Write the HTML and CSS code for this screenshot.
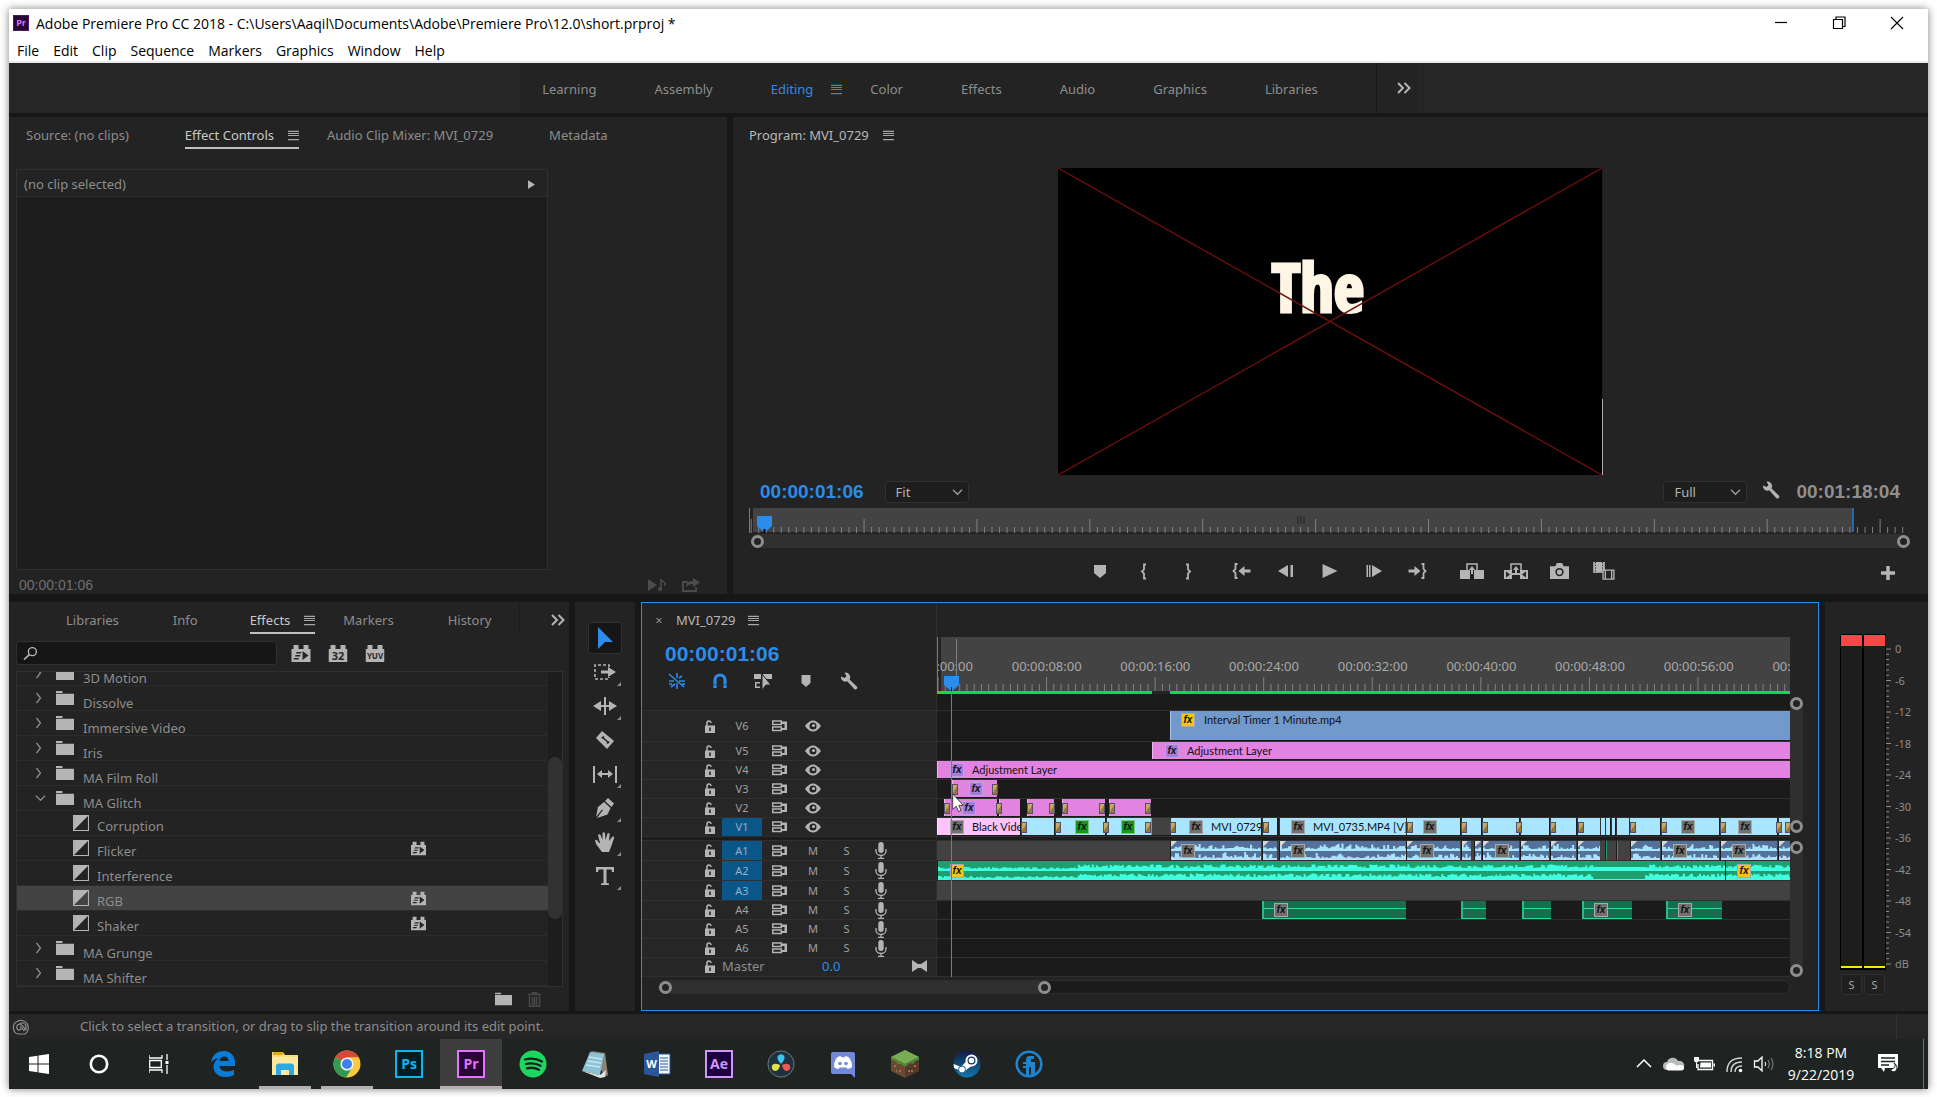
FILE: index.html
```html
<!DOCTYPE html>
<html lang="en">
<head>
<meta charset="utf-8">
<title>Adobe Premiere Pro CC 2018</title>
<link rel="stylesheet" href="styles.css">
</head>
<body>
<svg class="defs" aria-hidden="true">
  <symbol id="i-menu" viewBox="0 0 12 12"><path d="M0 1.5h12M0 6h12M0 10.5h12M0 3.8h12" stroke="currentColor" stroke-width="1.2" fill="none"/></symbol>
  <symbol id="i-more" viewBox="0 0 14 12"><path d="M1 1l5 5-5 5M7.500 1l5 5-5 5" stroke="currentColor" stroke-width="2" fill="none"/></symbol>
  <symbol id="i-down" viewBox="0 0 12 8"><path d="M1 1.500l5 5 5-5" stroke="currentColor" stroke-width="1.300" fill="none"/></symbol>
  <symbol id="i-right" viewBox="0 0 8 12"><path d="M1.500 1l4 5-4 5" stroke="currentColor" stroke-width="1.300" fill="none"/></symbol>
  <symbol id="i-wrench" viewBox="0 0 18 18"><path d="M1 4.500a4.500 4.500 0 0 0 6.300 4.800l6.900 7.600a1.700 1.700 0 0 0 2.600-2.300L9.500 7.500A4.500 4.500 0 0 0 4.500.800l2 3.300-1.900 1.900z" fill="currentColor"/></symbol>
  <symbol id="i-folder" viewBox="0 0 18 14"><path d="M0 0h6.500v2H0zM0 2.800h18V14H0z" fill="currentColor"/></symbol>
  <symbol id="i-trans" viewBox="0 0 15 15"><path d="M.5.5h14v14H.5z" fill="none" stroke="currentColor"/><path d="M1 1h13L1 14z" fill="currentColor"/></symbol>
  <symbol id="i-accel" viewBox="0 0 19 17"><path d="M0 4h2V0h5v4h5V0h5v4h2v13H0z" fill="currentColor"/><path d="M11 6l6 4.500-6 4.500zM5 7h5l-.5 1.500h-5zM4 10h5l-.5 1.500h-5zM2.500 13h5L7 14.500H2z" fill="#262626"/></symbol>
  <symbol id="i-brick" viewBox="0 0 19 17"><path d="M0 4h2V0h5v4h5V0h5v4h2v13H0z" fill="currentColor"/></symbol>
  <symbol id="i-lock" viewBox="0 0 10 13"><path d="M0 5.500h10V13H0z" fill="currentColor"/><path d="M2 6V3.200A2 2.200 0 0 1 6 3" fill="none" stroke="currentColor" stroke-width="1.500"/><path d="M4.200 7.500h1.600v3.500H4.200z" fill="#232323"/></symbol>
  <symbol id="i-sync" viewBox="0 0 16 12"><path d="M.700 1h8.600v3.600H.700zM.700 7h8.600v3.600H.700z" fill="none" stroke="currentColor" stroke-width="1.500"/><path d="M10 1.500h5v8.500h-5V8h2.500V4H10z" fill="currentColor"/></symbol>
  <symbol id="i-eye" viewBox="0 0 16 12"><path d="M0 6Q8-5 16 6 8 17 0 6z" fill="currentColor"/><circle cx="8" cy="6" r="3.500" fill="#232323"/><circle cx="8.500" cy="5.500" r="1.600" fill="currentColor"/></symbol>
  <symbol id="i-mic" viewBox="0 0 12 17"><rect x="3.300" y="0" width="5.400" height="11" rx="2.700" fill="currentColor"/><path d="M1 7v2a5 4.500 0 0 0 10 0V7M6 13.500v3M3 16.300h6" fill="none" stroke="currentColor" stroke-width="1.300"/></symbol>
  <symbol id="i-marker" viewBox="0 0 12 13"><path d="M0 0h12v8l-6 5-6-5z" fill="currentColor"/></symbol>
  <symbol id="i-win" viewBox="0 0 20 20"><path d="M0 3l8.500-1.200v7.700H0zM9.500 1.600L20 0v9.500H9.500zM0 10.500h8.500v7.700L0 17zM9.500 10.500H20V20L9.500 18.400z" fill="#fff"/></symbol>
</svg>

<div class="window">
  <header class="titlebar">
    <svg class="app-mark" viewBox="0 0 16 16"><path d="M0 0h16v16H0z" fill="#2a0634"/><path d="M.5.5h15v15H.5z" fill="none" stroke="#4c1766"/><text x="8" y="11" text-anchor="middle" class="mark-text">Pr</text></svg>
    <h1 class="title">Adobe Premiere Pro CC 2018 - C:\Users\Aaqil\Documents\Adobe\Premiere Pro\12.0\short.prproj *</h1>
    <div class="win-controls">
      <button aria-label="Minimize"><svg viewBox="0 0 14 14"><path d="M1 6.500h12" stroke="#000" stroke-width="1.200"/></svg></button>
      <button aria-label="Restore"><svg viewBox="0 0 14 14"><path d="M1.500 3.500h9v9h-9zM4 3V1h9v9.500h-2" fill="none" stroke="#000" stroke-width="1.200"/></svg></button>
      <button aria-label="Close"><svg viewBox="0 0 14 14"><path d="M1 1l12 12M13 1L1 13" stroke="#000" stroke-width="1.200"/></svg></button>
    </div>
  </header>
  <nav class="menubar" aria-label="Menu">
    <button>File</button><button>Edit</button><button>Clip</button><button>Sequence</button><button>Markers</button><button>Graphics</button><button>Window</button><button>Help</button>
  </nav>

  <nav class="workspaces" aria-label="Workspaces">
    <div class="workspace-group">
      <button>Learning</button><button>Assembly</button>
      <button class="on">Editing<svg class="menu-icon"><use href="#i-menu"/></svg></button>
      <button class="after-on">Color</button><button>Effects</button><button>Audio</button><button>Graphics</button><button>Libraries</button>
      <button class="more" aria-label="More workspaces"><svg class="more-icon"><use href="#i-more"/></svg></button>
    </div>
  </nav>

  <main class="panels">
    <div class="top-row">
      <section class="panel effect-controls">
        <div class="tabs tabs-source">
          <button class="tab">Source: (no clips)</button>
          <button class="tab active">Effect Controls<svg class="menu-icon"><use href="#i-menu"/></svg></button>
          <button class="tab">Audio Clip Mixer: MVI_0729</button>
          <button class="tab">Metadata</button>
        </div>
        <div class="clip-area">
          <div class="clip-head"><span>(no clip selected)</span><svg class="tri" viewBox="0 0 8 10"><path d="M0 0l8 5-8 5z" fill="currentColor"/></svg></div>
          <div class="clip-body"></div>
        </div>
        <div class="ec-foot">
          <span class="tc-small">00:00:01:06</span>
          <svg class="foot-icon" viewBox="0 0 18 14"><path d="M0 1l9 6-9 6z" fill="currentColor"/><path d="M13 11V2l4 3v3" fill="none" stroke="currentColor" stroke-width="1.500"/><circle cx="12" cy="11" r="2" fill="currentColor"/></svg>
          <svg class="foot-icon" viewBox="0 0 18 14"><path d="M6 4H1v9h13V9" fill="none" stroke="currentColor" stroke-width="1.800"/><path d="M4 9c0-4 3-6 7-6V0l7 4.500L11 9V6C8 6 6 7 4 9z" fill="currentColor"/></svg>
        </div>
      </section>

      <section class="panel program">
        <div class="tabs tabs-program"><button class="tab lit">Program: MVI_0729<svg class="menu-icon"><use href="#i-menu"/></svg></button></div>
        <div class="monitor">
          <span class="caption">The</span>
          <svg class="cross" viewBox="0 0 545 307" preserveAspectRatio="none"><path d="M0 0l545 307M545 0L0 307" stroke="#6c0f0c" stroke-width="1.400"/></svg>
        </div>
        <div class="monitor-bar">
          <span class="tc blue">00:00:01:06</span>
          <span class="pick"><select aria-label="Zoom level"><option>Fit</option></select><svg class="chev"><use href="#i-down"/></svg></span>
          <span class="pick pick-right"><select aria-label="Playback resolution"><option>Full</option></select><svg class="chev"><use href="#i-down"/></svg></span>
          <button class="icon-btn" aria-label="Settings"><svg class="i18"><use href="#i-wrench"/></svg></button>
          <span class="tc grey">00:01:18:04</span>
        </div>
        <div class="scrub">
          <div class="scrub-range"></div>
          <svg class="ticks" id="scrub-ticks"></svg>
          <svg class="grip" viewBox="0 0 8 8"><path d="M1 0v8M4 0v8M7 0v8" stroke="#222"/></svg>
          <svg class="scrub-head" viewBox="0 0 15 17"><path d="M0 0h15v10l-7.500 7L0 10z" fill="#2b8ceb"/><path d="M7.500 13v4" stroke="#000" stroke-width="2"/></svg>
        </div>
        <div class="hbar"><i class="ring"></i><i class="ring"></i></div>
        <div class="transport">
          <div class="transport-group">
            <button aria-label="Add marker"><svg class="w12" viewBox="0 0 12 13"><use href="#i-marker"/></svg></button>
            <button aria-label="Mark in"><svg class="w8" viewBox="0 0 8 16"><path d="M6 1H4v5L2 8l2 2v5h2" fill="none" stroke="currentColor" stroke-width="1.800"/></svg></button>
            <button aria-label="Mark out"><svg class="w8" viewBox="0 0 8 16"><path d="M2 1h2v5l2 2-2 2v5H2" fill="none" stroke="currentColor" stroke-width="1.800"/></svg></button>
            <button class="gap-before" aria-label="Go to in"><svg class="w18" viewBox="0 0 18 16"><path d="M5 1H3v5L1 8l2 2v5h2" fill="none" stroke="currentColor" stroke-width="1.800"/><path d="M6 8l6-5v3.500h6v3h-6V13z" fill="currentColor"/></svg></button>
            <button aria-label="Step back"><svg class="w16" viewBox="0 0 16 12"><path d="M0 6l10-6v12zM12.500 0h2.500v12h-2.500z" fill="currentColor"/></svg></button>
            <button aria-label="Play"><svg class="w16" viewBox="0 0 16 15"><path d="M0 0l16 7.500L0 15z" fill="currentColor"/></svg></button>
            <button aria-label="Step forward"><svg class="w16" viewBox="0 0 16 12"><path d="M16 6L6 0v12zM.5 0h1.500v12H.5zM3 0h1.500v12H3z" fill="currentColor"/></svg></button>
            <button aria-label="Go to out"><svg class="w18" viewBox="0 0 18 16"><path d="M13 1h2v5l2 2-2 2v5h-2" fill="none" stroke="currentColor" stroke-width="1.800"/><path d="M12 8L6 3v3.500H0v3h6V13z" fill="currentColor"/></svg></button>
            <button class="gap-before" aria-label="Lift"><svg class="w24" viewBox="0 0 24 16"><path d="M0 7h10v9H0zM14 7h10v9H14z" fill="currentColor"/><path d="M7 10V1h10v9" fill="none" stroke="currentColor" stroke-width="1.500"/><path d="M12 3l3 4h-2v4h-2V7H9z" fill="currentColor"/></svg></button>
            <button aria-label="Extract"><svg class="w24" viewBox="0 0 24 16"><path d="M0 7h8v9H0zM16 7h8v9h-8z" fill="currentColor"/><path d="M7 10V1h10v9" fill="none" stroke="currentColor" stroke-width="1.500"/><path d="M12 3l3 4h-2v4h-2V7H9z" fill="currentColor"/><path d="M2 8.500l4 3-4 3zM22 8.500l-4 3 4 3z" fill="#232323"/><path d="M8 10h8v2H8z" fill="currentColor"/></svg></button>
            <button aria-label="Export frame"><svg class="w18" viewBox="0 0 18 15"><path d="M0 3h5l1.500-3h5L13 3h5v12H0z" fill="currentColor"/><circle cx="9" cy="8.500" r="3.200" fill="none" stroke="#232323" stroke-width="1.500"/></svg></button>
            <button aria-label="Comparison view"><svg class="w24" viewBox="0 0 24 20"><path d="M0 0h13v12H0z" fill="currentColor"/><path d="M2.500 0v12M10.500 0v12" stroke="#232323" stroke-dasharray="1.500 1.500"/><path d="M11 9h12v10H11z" fill="#232323" stroke="currentColor" stroke-width="1.500"/><path d="M13.500 9v10M20.500 9v10" stroke="currentColor" stroke-width="1.500"/></svg></button>
          </div>
          <button class="plus" aria-label="Button editor"><svg class="w14" viewBox="0 0 14 14"><path d="M7 0v14M0 7h14" stroke="currentColor" stroke-width="3.500"/></svg></button>
        </div>
      </section>
    </div>

    <div class="bottom-row">
      <section class="panel effects">
        <div class="tabs tabs-effects">
          <button class="tab">Libraries</button><button class="tab">Info</button>
          <button class="tab active">Effects<svg class="menu-icon"><use href="#i-menu"/></svg></button>
          <button class="tab">Markers</button><button class="tab">History</button>
          <button class="tab-more" aria-label="More panels"><svg class="more-icon"><use href="#i-more"/></svg></button>
        </div>
        <div class="search-row">
          <label class="search"><svg class="lens" viewBox="0 0 16 14"><circle cx="10" cy="5" r="4.300" fill="none" stroke="currentColor" stroke-width="1.500"/><path d="M7 8l-6 5.500" stroke="currentColor" stroke-width="1.800"/></svg><input type="text" aria-label="Search effects"></label>
          <button class="brick" aria-label="Accelerated effects"><svg><use href="#i-accel"/></svg></button>
          <button class="brick" aria-label="32-bit color"><svg viewBox="0 0 19 17"><use href="#i-brick"/><text x="9.500" y="15" text-anchor="middle" class="brick-text">32</text></svg></button>
          <button class="brick" aria-label="YUV effects"><svg viewBox="0 0 19 17"><use href="#i-brick"/><text x="9.500" y="14" text-anchor="middle" class="brick-text small">YUV</text></svg></button>
        </div>
        <div class="tree-wrap">
          <ul class="tree" id="tree"></ul>
          <div class="tree-scroll"><i class="thumb"></i></div>
        </div>
        <div class="tree-foot">
          <button class="icon-btn" aria-label="New bin"><svg class="w17" viewBox="0 0 18 14"><use href="#i-folder"/></svg></button>
          <button class="icon-btn dim" aria-label="Delete"><svg class="w13" viewBox="0 0 13 15"><path d="M0 2.500h13M4.500 2V.700h4V2M1.500 4v10.300h10V4M4.500 5v8M6.500 5v8M8.500 5v8" fill="none" stroke="currentColor" stroke-width="1.400"/></svg></button>
        </div>
      </section>

      <section class="panel tools" aria-label="Tools">
        <button class="tool on" aria-label="Selection"><svg viewBox="0 0 24 24"><path d="M5 1l15 15h-8l-7 7z" fill="#2b8ceb"/></svg></button>
        <button class="tool sub" aria-label="Track select"><svg viewBox="0 0 24 24"><path d="M16 7V5H2v14h14v-2" fill="none" stroke="currentColor" stroke-width="1.600" stroke-dasharray="3 2"/><path d="M8 10.500h7V7l8 5-8 5v-3.500H8z" fill="currentColor"/></svg></button>
        <button class="tool sub" aria-label="Ripple edit"><svg viewBox="0 0 24 24"><path d="M12 3v18" stroke="currentColor" stroke-width="2"/><path d="M0 12l8-5v4h8V7l8 5-8 5v-4H8v4z" fill="currentColor"/></svg></button>
        <button class="tool" aria-label="Razor"><svg viewBox="0 0 24 24"><path d="M9 3l12 10-7 8L3 10z" fill="currentColor"/><path d="M9 9l7 6M9 10.500l2-2M14 15.500l2-2" stroke="#232323" stroke-width="1.600"/></svg></button>
        <button class="tool sub" aria-label="Slip"><svg viewBox="0 0 24 24"><path d="M1 4v17M23 4v17" stroke="currentColor" stroke-width="2"/><path d="M4 12l5-4v3h6V8l5 4-5 4v-3H9v3z" fill="currentColor"/></svg></button>
        <button class="tool sub" aria-label="Pen"><svg viewBox="0 0 24 24"><path d="M15 2l6 5.500-2.500 3.500-6.500-6zM11 6l6.500 6-3 6.500L4 22l6-8-1-.5L3 21l2-10z" fill="currentColor"/></svg></button>
        <button class="tool sub" aria-label="Hand"><svg viewBox="0 0 24 24"><path d="M9 22L3 14l-1-4q2-1 4 3l1 0L5 5q1.500-1.500 2.500 0L9.500 10 9.500 3q1.200-1.500 2.500 0l.5 7L14.500 3.500q1.500-1 2.200.5L16 11l3.500-4.500q1.500-.5 1.800 1L18 17l-2 5z" fill="currentColor"/></svg></button>
        <button class="tool sub" aria-label="Type"><svg viewBox="0 0 24 24"><path d="M3 3h18v5h-2l-.5-2.500h-5V19l2.500.5V21H8v-1.500l2.500-.5V5.500h-5L5 8H3z" fill="currentColor"/></svg></button>
      </section>

      <section class="panel timeline" aria-label="Timeline">
        <div class="tl-grid">
          <div class="tl-left">
            <div class="tl-tab"><button class="close" aria-label="Close sequence">×</button><button class="tab lit">MVI_0729<svg class="menu-icon"><use href="#i-menu"/></svg></button></div>
            <div class="tc-big">00:00:01:06</div>
            <div class="tl-tools">
              <button class="blue" aria-label="Nest"><svg viewBox="0 0 18 18"><path d="M1 2l15 13M9 1v5M9 11v6M1 9h5M11 9h6M3 15l4-3M11 6l3-2M1 12h3M14 12h3" stroke="currentColor" stroke-width="1.600"/></svg></button>
              <button class="blue" aria-label="Snap"><svg viewBox="0 0 18 18"><path d="M4 16V8a5 5 0 0 1 10 0v8" fill="none" stroke="currentColor" stroke-width="3.200"/><path d="M2 12.500h4M12 12.500h4" stroke="#1a4f83"/></svg></button>
              <button aria-label="Linked selection"><svg viewBox="0 0 18 18"><path d="M0 2h7v5H0zM9 2h9v5H9zM6 10H1v6h5v-1.500H2.500v-3H6z" fill="currentColor"/><path d="M8 2l9 11h-5l-4 5z" fill="currentColor" stroke="#232323"/></svg></button>
              <button aria-label="Add marker"><svg viewBox="0 0 18 18"><path d="M4.500 3h9v8L9 15l-4.500-4z" fill="currentColor"/></svg></button>
              <button aria-label="Timeline settings"><svg viewBox="0 0 18 18"><use href="#i-wrench"/></svg></button>
            </div>
            <div class="heads" id="heads"></div>
          </div>
          <div class="tl-body">
            <div class="ruler"><div class="labels" id="labels"></div><svg class="ticks" id="ruler-ticks"></svg><i class="origin"></i></div>
            <div class="render-bar"><i class="done first"></i><i class="done rest"></i></div>
            <div class="lanes" id="lanes"></div>
            <div class="playhead"></div>
            <svg class="play-cap" viewBox="0 0 15 15"><path d="M0 0h15v9l-7 6h-1l-7-6z" fill="#2b8ceb"/><path d="M7.500 11v4" stroke="#111"/></svg>
            <svg class="pointer" viewBox="0 0 12 19"><path d="M.7 1v15.500l3.500-3.300 2.300 5.300 2.600-1-2.300-5.200h4.500z" fill="#fff" stroke="#222" stroke-width=".8"/></svg>
          </div>
          <div class="tl-right">
            <div class="vbar"><i class="ring"></i><i class="ring"></i></div>
            <div class="vbar"><i class="ring"></i><i class="ring"></i></div>
          </div>
        </div>
        <div class="tl-scroll"><div class="tl-thumb"><i class="ring"></i><i class="ring"></i></div></div>
      </section>

      <section class="panel meters" aria-label="Audio meters">
        <div class="meter-main">
          <div class="meter-box"><i class="channel"></i><i class="channel"></i></div>
          <div class="scale">
            <svg class="scale-ticks" id="scale-ticks"></svg>
            <span>0</span><span>-6</span><span>-12</span><span>-18</span><span>-24</span><span>-30</span><span>-36</span><span>-42</span><span>-48</span><span>-54</span><span>dB</span>
          </div>
        </div>
        <div class="solo"><button>S</button><button>S</button></div>
      </section>
    </div>
  </main>

  <footer class="status">
    <svg class="cc" viewBox="0 0 20 16"><path d="M6 15a5.500 6.500 0 0 1-1-12.500A7 7 0 1 1 13 15z" fill="none" stroke="currentColor" stroke-width="1.200"/><path d="M14.500 11L9 5.500a3 3 0 1 0-2.500 5.500q1.500 0 2.500-1M7 5.500a4 4 0 1 1 5 6L8 7.500" fill="none" stroke="currentColor" stroke-width="1.300"/></svg>
    <p>Click to select a transition, or drag to slip the transition around its edit point.</p>
  </footer>

  <nav class="taskbar" aria-label="Taskbar">
    <div class="sys">
      <button aria-label="Start"><svg class="s20"><use href="#i-win"/></svg></button>
      <button aria-label="Search"><svg class="s20" viewBox="0 0 20 20"><circle cx="10" cy="10" r="8.200" fill="none" stroke="#fff" stroke-width="2.600"/></svg></button>
      <button aria-label="Task view"><svg class="s20" viewBox="0 0 20 20"><path d="M0 1v3h13V1M0 19v-3h13v3M.7 6.500h11.600v7H.7zM18 0v6M18 11v9" fill="none" stroke="#fff" stroke-width="1.300"/><path d="M16.500 7h3v3h-3z" fill="#fff"/></svg></button>
    </div>
    <div class="apps">
      <button aria-label="Edge"><svg viewBox="0 0 28 28"><path d="M2 13C3 5 8 1 14.500 1 22 1 26 6 26 13v3H10.500c.3 4 4 5.500 7.500 5.500 3 0 5.500-.8 7-1.700v5.200c-2 1.300-5 2-8.500 2C9 27 4.500 22.500 4.500 17c0-4 2-7 5.500-8.700C6.500 8.500 3.500 10 2 13zm8.500-2h9c0-3-1.500-4.500-4.300-4.500-2.500 0-4.200 1.700-4.700 4.500z" fill="#0b7bd8"/></svg></button>
      <button class="open" aria-label="File Explorer"><svg viewBox="0 0 28 28"><path d="M1 2h11l2 3h13v20H1z" fill="#f9dc82"/><path d="M2 2h10v3H2z" fill="#e7a42c"/><path d="M1 7h26v18H1z" fill="#ffe9a0"/><path d="M5 25V15l2-1.500h14l2 1.500v10h-5v-5h-8v5z" fill="#2ba9e0"/></svg></button>
      <button class="open" aria-label="Chrome"><svg viewBox="0 0 28 28"><circle cx="14" cy="14" r="13.500" fill="#fbc93f"/><path d="M14 14L2.300 7.200A13.500 13.500 0 0 1 25.700 7.200H14z" fill="#d8483a"/><path d="M14 14l-11.700-6.800A13.500 13.500 0 0 0 13 27.500l6-9.500z" fill="#2f9a50"/><circle cx="14" cy="14" r="6.600" fill="#f3f3f3"/><circle cx="14" cy="14" r="5" fill="#3f80e8"/></svg></button>
      <button aria-label="Photoshop"><svg viewBox="0 0 28 28"><path d="M1 1h26v26H1z" fill="#001d26" stroke="#0cb8ea" stroke-width="2"/><text x="14" y="19" text-anchor="middle" class="adobe ps">Ps</text></svg></button>
      <button class="open current" aria-label="Premiere Pro"><svg viewBox="0 0 28 28"><path d="M1 1h26v26H1z" fill="#2a0634" stroke="#e273ff" stroke-width="2"/><text x="14" y="19" text-anchor="middle" class="adobe pr">Pr</text></svg></button>
      <button aria-label="Spotify"><svg viewBox="0 0 28 28"><circle cx="14" cy="14" r="13.500" fill="#1fd760"/><path d="M6 9.500q9-2.500 17 2M7 14q8-2 14.500 1.800M8 18.300q6.500-1.600 12 1.500" fill="none" stroke="#14241b" stroke-width="2.300" stroke-linecap="round"/></svg></button>
      <button aria-label="Notepad"><svg viewBox="0 0 28 28"><path d="M10 1l14 2 3 22-3 2z" fill="#8d8474"/><path d="M9 2l14 2-4 21L1 21z" fill="#8cc3d6"/><path d="M8 7l13 2M6.500 11l13.500 2M5 15l14 2" stroke="#c7e6ef" stroke-width="1.500"/><path d="M1 21l18 4 6-5-1 7-5 1z" fill="#dfe3e4"/></svg></button>
      <button aria-label="Word"><svg viewBox="0 0 28 28"><path d="M15 4h12v20H15z" fill="#f3f6fb" stroke="#2b579a"/><path d="M17 8h8M17 11h8M17 14h8M17 17h8M17 20h8" stroke="#2b579a" stroke-width="1.200"/><path d="M1 4l15-3v26L1 24z" fill="#2b579a"/><text x="8.500" y="18" text-anchor="middle" class="word">W</text></svg></button>
      <button aria-label="After Effects"><svg viewBox="0 0 28 28"><path d="M1 1h26v26H1z" fill="#1c003d" stroke="#cf96fd" stroke-width="2"/><text x="14" y="19" text-anchor="middle" class="adobe ae">Ae</text></svg></button>
      <button aria-label="DaVinci Resolve"><svg viewBox="0 0 30 30"><circle cx="15" cy="15" r="14" fill="#1f3040" stroke="#6e7f7c"/><path d="M15 15q-5-5-3.500-8.500a4 4 0 0 1 7 0Q20 10 15 15z" fill="#3cc6ee"/><path d="M14 16q-1 6-5 6.500a4 4 0 0 1-3.300-6.200Q8 13.500 14 16z" fill="#dfe04a"/><path d="M16 16q1 6 5 6.500a4 4 0 0 0 3.300-6.200Q22 13.500 16 16z" fill="#ec5a4e"/></svg></button>
      <button aria-label="Discord"><svg viewBox="0 0 28 28"><path d="M4 2h20a2 2 0 0 1 2 2v24l-4-4H4a2 2 0 0 1-2-2V4a2 2 0 0 1 2-2z" fill="#7289da"/><path d="M5 17q0-6 3-9.500 2-1.500 4-1.200l.5 1h3l.5-1q2-.3 4 1.200 3 3.500 3 9.500-2 2-4.500 2l-1-1.500h-7L9.500 19Q7 19 5 17z" fill="#fff"/><circle cx="11" cy="13.500" r="1.800" fill="#7289da"/><circle cx="17" cy="13.500" r="1.800" fill="#7289da"/></svg></button>
      <button aria-label="Minecraft"><svg viewBox="0 0 28 28"><path d="M14 0l14 7v14l-14 7-14-7V7z" fill="#6a4a32"/><path d="M14 14l14-7v14l-14 7z" fill="#54392a"/><path d="M14 0l14 7-14 7L0 7z" fill="#79ad55"/><path d="M0 7l14 7 14-7v3l-4 1-2 3-3-1-5 4-4-3-3 0-3-3-4-1z" fill="#4a8a35"/><path d="M3 15h2v2H3zM8 20h2v2H8zM5 20h1v2H5zM17 20h2v2h-2zM23 15h2v2h-2zM20 22h2v-2h-2z" fill="#96714f"/></svg></button>
      <button aria-label="Steam"><svg viewBox="0 0 28 28"><defs><linearGradient id="g-steam" x2="0" y2="1"><stop offset="0" stop-color="#111b40"/><stop offset="1" stop-color="#1178ae"/></linearGradient></defs><circle cx="14" cy="14" r="13.500" fill="url(#g-steam)"/><path d="M.5 14l7.500 3 6-6.500 5 5-6.500 5L11 22l-10-4z" fill="#fff"/><circle cx="18.500" cy="10.500" r="5" fill="#14305a" stroke="#fff" stroke-width="2"/><circle cx="18.500" cy="10.500" r="2.800" fill="#fff"/><circle cx="9" cy="19.500" r="3.500" fill="#fff" stroke="#17618f"/></svg></button>
      <button aria-label="Caliper app"><svg viewBox="0 0 28 28"><circle cx="14" cy="14" r="12.300" fill="none" stroke="#1d86d1" stroke-width="2.600"/><path d="M11 26V10q0-4 4-4h4v3h-3v3h4v13l-4 1v-9h-2v9z" fill="#1d86d1"/><path d="M8 12h4v2H8zM8 16h4v2H8z" fill="#1d86d1"/></svg></button>
    </div>
    <div class="tray">
      <button aria-label="Hidden icons"><svg viewBox="0 0 22 18"><path d="M4 12l7-7 7 7" fill="none" stroke="#fff" stroke-width="1.500"/></svg></button>
      <button aria-label="OneDrive"><svg viewBox="0 0 22 18"><path d="M4 15a4 4 0 0 1 0-8 6 6 0 0 1 11-1 4.500 4.500 0 0 1 3 9z" fill="#b7bab9"/><path d="M5 15.500a4 4 0 0 1 0-7q5-2 8 2 8-2 8 2.500 0 2.500-3 2.500z" fill="#fff"/></svg></button>
      <button aria-label="Battery"><svg viewBox="0 0 22 18"><path d="M6 5.500h13.500v9H5V9" fill="none" stroke="#fff" stroke-width="1.400"/><path d="M7.500 7.500H18v5H7zM20.500 8.500h1.500v3h-1.500zM1 2h5v4L3.500 8 1 6z" fill="#fff"/><path d="M3.500 8v5" stroke="#fff"/></svg></button>
      <button aria-label="Network"><svg viewBox="0 0 22 18"><path d="M4 17Q4 3 19 3M8 17Q8 7 19 7M12 17Q12 11 19 11" fill="none" stroke="#d5d5d5" stroke-width="1.400"/><circle cx="17.500" cy="15.500" r="1.800" fill="#fff"/></svg></button>
      <button aria-label="Volume"><svg viewBox="0 0 22 18"><path d="M1.500 6h3.500l4-4v14l-4-4H1.500z" fill="none" stroke="#fff" stroke-width="1.300"/><path d="M12 7q1.500 2 0 4" fill="none" stroke="#fff"/><path d="M15 5q3 4 0 8M18 3q4 6 0 12" fill="none" stroke="#868a89"/></svg></button>
      <button class="clock"><span>8:18 PM</span><span>9/22/2019</span></button>
      <button class="notify" aria-label="Notifications"><svg viewBox="0 0 22 22"><path d="M1 1h20v14h-9l-4 0-1 4-3-4H1z" fill="#fff"/><path d="M4 5h14M4 8.500h14M4 12h8" stroke="#1f2423" stroke-width="1.300"/><path d="M17 10q4 4-4 7 5 4 7-1 1-4-3-6z" fill="#fff" stroke="#1f2423"/></svg></button>
    </div>
  </nav>
</div>
<script src="script.js"></script>
</body>
</html>
```
FILE: styles.css
```css
* { box-sizing: border-box; }
body { margin: 0; background: #fff; font: 13px/16px "Noto Sans", "Open Sans", sans-serif; color: #8d8d8d; }
button { border: 0; padding: 0; margin: 0; background: none; font: inherit; color: inherit; }
svg { display: block; }
h1, p, ul { margin: 0; padding: 0; font: inherit; }
i { display: block; }
.defs { position: absolute; width: 0; height: 0; }

.window { margin: 9px 9px 8px; min-height: calc(100vh - 17px); display: flex; flex-direction: column; background: #171717; box-shadow: 0 0 8px rgba(0, 0, 0, .5); }

/* Title and menu */
.titlebar { height: 28px; display: flex; align-items: center; background: #fff; color: #000; padding-left: 4px; }
.app-mark { width: 16px; height: 16px; }
.mark-text { font: bold 9px "Open Sans", sans-serif; fill: #d974ff; }
.title { flex: 1; padding: 1px 0 0 7px; font: 14px/20px "Open Sans", sans-serif; }
.win-controls { display: flex; padding-right: 2px; }
.win-controls button { width: 58px; display: flex; justify-content: center; }
.win-controls svg { width: 14px; height: 14px; }
.menubar { height: 26px; display: flex; gap: 14px; padding: 3px 0 0 8px; background: #fff; color: #000; font: 14px/20px "Open Sans", sans-serif; border-bottom: 2px solid #ebebeb; }

/* Workspace tabs */
.workspaces { height: 50px; display: flex; justify-content: center; background: #262626; }
.workspace-group { display: flex; gap: 58px; align-items: stretch; padding-left: 22px; background: #232323; }
.workspace-group button { display: flex; align-items: center; gap: 18px; padding-top: 2px; }
.workspace-group .on { color: #2b8ceb; }
.workspace-group .after-on { margin-left: -30px; }
.workspace-group .more { padding: 0 6px 0 20px; border-left: 1px solid #171717; color: #b4b4b4; }
.menu-icon { width: 11px; height: 11px; }
.more-icon { width: 14px; height: 12px; }

/* Panels */
.panels { flex: 1; display: flex; flex-direction: column; gap: 8px; padding: 4px 0 3px; }
.top-row { flex: 1; min-height: 477px; display: grid; grid-template-columns: minmax(0, 718fr) minmax(0, 1195fr); gap: 6px; }
.bottom-row { display: grid; grid-template-columns: minmax(0, 560fr) 60px minmax(0, 1178fr) 103px; gap: 6px; }
.panel { background: #232323; display: flex; flex-direction: column; min-width: 0; }
.tabs { display: flex; height: 36px; align-items: flex-end; }
.tab { height: 28px; line-height: 20px; display: flex; align-items: flex-start; white-space: nowrap; }
.tab .menu-icon { margin: 5px 0 0 14px; color: #a8a8a8; }
.tab.active { color: #c8c8c8; border-bottom: 2px solid #c0c0c0; }
.tab.lit { color: #b8b8b8; }

.tabs-source { padding-left: 17px; height: 32px; }
.tabs-source .tab { height: 24px; }
.tabs-source .tab + .tab { margin-left: 56px; }
.tabs-source .tab.active + .tab { margin-left: 28px; }
.clip-area { flex: 1; width: 532px; margin: 20px 0 0 7px; display: flex; flex-direction: column; border: 1px solid #303030; }
.clip-head { height: 27px; display: flex; align-items: center; justify-content: space-between; padding: 2px 12px 0 7px; border-bottom: 1px solid #303030; }
.tri { width: 7px; height: 11px; color: #b4b4b4; }
.clip-body { flex: 1; background: #1d1d1d; }
.ec-foot { height: 24px; display: flex; align-items: center; gap: 16px; padding: 5px 27px 0 10px; color: #4c4c4c; }
.ec-foot .tc-small { margin-right: auto; color: #6f6f6f; font: 14px/16px "Liberation Sans", sans-serif; }
.foot-icon { width: 18px; height: 14px; }

/* Program monitor */
.program { padding: 0 16px; }
.tabs-program { height: 32px; }
.tabs-program .tab { height: 24px; }
.monitor { position: relative; flex: 1; align-self: center; aspect-ratio: 545 / 307; margin-top: 19px; background: #000; border-style: solid; border-image: linear-gradient(#1d1d1d 75%, #aaa 75%) 1; border-width: 0 1px 0 0; display: flex; justify-content: center; }
.caption { color: #fff5e4; font: 800 66px/70px "Open Sans Condensed", "Open Sans", sans-serif; -webkit-text-stroke: 3px #fff5e4; padding: 83px 24px 0 0; }
.cross { position: absolute; inset: 0; width: 100%; height: 100%; }
.monitor-bar { height: 33px; display: flex; align-items: center; padding: 0 12px 0 11px; }
.tc { font: bold 19px/22px "Liberation Sans", sans-serif; }
.blue { color: #2b8ceb; }
.grey { color: #8f8f8f; }
.pick { position: relative; margin-left: 21px; }
.pick select { appearance: none; width: 84px; height: 22px; padding: 0 0 0 10px; background: #1d1d1d; border: 1px solid #303030; border-radius: 3px; color: #b4b4b4; font: inherit; }
.chev { position: absolute; right: 6px; top: 7px; width: 11px; height: 8px; color: #a0a0a0; pointer-events: none; }
.pick-right { margin-left: auto; }
.icon-btn { color: #b4b4b4; }
.i18 { width: 18px; height: 20px; }
.monitor-bar .icon-btn { margin: 0 16px 4px 15px; }
.scrub { position: relative; height: 25px; border-left: 1px solid #2b8ceb; }
.scrub-range { margin: 0 5% 0 3px; height: 24px; background: #434343; border-right: 2px solid #2468b0; }
.ticks { position: absolute; left: 0; bottom: 0; width: 100%; height: 14px; }
.ticks line { stroke: #828282; }
.grip { position: absolute; left: 47%; top: 8px; width: 10px; height: 8px; }
.scrub-head { position: absolute; left: 7px; top: 8px; width: 15px; height: 17px; }
.ring { width: 13px; height: 13px; border: 3px solid #8e8e8e; border-radius: 50%; background: #232323; }
.hbar { height: 14px; display: flex; justify-content: space-between; align-items: center; margin: 1px 2px 0 2px; background: #303030; border-radius: 7px; }
.transport { height: 46px; display: grid; grid-template-columns: 1fr auto 1fr; align-items: center; color: #b4b4b4; }
.transport-group { grid-column: 2; display: flex; padding-left: 42px; }
.transport-group button { width: 44px; height: 24px; display: flex; align-items: center; justify-content: center; }
.transport-group .gap-before { margin-left: 10px; }
.plus { grid-column: 3; justify-self: end; margin: 4px 17px 0 0; }
.w8 { width: 8px; height: 17px; }
.w12 { width: 12px; height: 13px; }
.w13 { width: 13px; height: 15px; }
.w14 { width: 14px; height: 14px; }
.w16 { width: 16px; height: 14px; }
.w17 { width: 17px; height: 14px; }
.w18 { width: 19px; height: 16px; }
.w24 { width: 24px; height: 18px; }

/* Effects browser */
.tabs-effects { height: 32px; padding-left: 57px; }
.tabs-effects .tab { height: 24px; }
.tabs-effects .tab + .tab { margin-left: 54px; }
.tabs-effects .tab.active { margin-left: 52px; }
.tabs-effects .tab.active + .tab { margin-left: 28px; }
.tabs-effects .tab-more { align-self: stretch; margin: 3px 4px 0 auto; padding-left: 31px; border-left: 1px solid #1a1a1a; color: #b4b4b4; }
.search-row { display: flex; align-items: center; height: 24px; margin: 7px 0 0 7px; }
.search { width: 261px; height: 24px; display: flex; align-items: center; background: #161616; border: 1px solid #303030; border-radius: 3px; padding-left: 6px; margin-right: -3px; }
.search input { flex: 1; min-width: 0; background: none; border: 0; outline: 0; color: #b4b4b4; font: inherit; }
.lens { width: 15px; height: 13px; color: #b4b4b4; }
.brick { margin-left: 17px; color: #b4b4b4; }
.brick svg { width: 20px; height: 17px; }
.brick-text { font: bold 11px "Open Sans", sans-serif; fill: #262626; }
.brick-text.small { font-size: 8px; }
.tree-wrap { display: flex; height: 316px; margin: 6px 6px 0 7px; border: 1px solid #303030; }
.tree { flex: 1; display: flex; flex-direction: column; justify-content: flex-end; overflow: hidden; list-style: none; }
.row { flex: none; height: 25px; display: flex; align-items: center; border-bottom: 1px solid #2b2b2b; padding-left: 18px; }
.row svg { color: #b4b4b4; }
.row .arrow { width: 8px; height: 12px; color: #8d8d8d; }
.row .arrow.open { width: 11px; height: 8px; }
.row .slot { width: 21px; }
.row .folder { width: 18px; height: 14px; }
.row .name { padding: 9px 0 0 9px; }
.row.child { padding-left: 56px; }
.row.child .fx-icon { width: 16px; height: 16px; }
.row.child .name { padding: 5px 0 0 8px; flex: 1; }
.row.child .badge { width: 15px; height: 15px; margin-right: 122px; }
.row.selected { background: #434343; }
.tree-scroll { width: 14px; background: #1d1d1d; padding-top: 85px; }
.thumb { height: 162px; border-radius: 7px; background: #323232; }
.tree-foot { display: flex; justify-content: flex-end; align-items: center; gap: 16px; height: 24px; padding: 0 28px 0 0; }
.dim { color: #4a4a4a; }

/* Tools */
.tools { align-items: center; padding-top: 19px; }
.tool { position: relative; width: 34px; height: 34px; display: flex; align-items: center; justify-content: center; color: #b4b4b4; }
.tool svg { width: 24px; height: 24px; }
.tool.on { background: #161616; border: 1px solid #303030; border-radius: 3px; height: 32px; margin: 1px 0; }
.tool.sub::after { content: ""; position: absolute; right: 1px; bottom: 3px; border: 2px solid #8d8d8d; border-left-color: transparent; border-top-color: transparent; }

/* Timeline */
.timeline { border: 1px solid #2b8ceb; padding-bottom: 16px; }
.tl-grid { display: grid; grid-template-columns: 295px minmax(0, 1fr) 28px; }
.tl-tab { height: 36px; display: flex; align-items: center; padding: 0 0 2px 12px; }
.tl-tab .tab { height: 20px; }
.tl-tab .menu-icon { margin-left: 12px; }
.close { width: 10px; margin-right: 12px; }
.tc-big { height: 30px; padding-left: 23px; color: #2b8ceb; font: bold 21px/30px "Liberation Sans", sans-serif; }
.tl-tools { height: 41px; display: flex; align-items: flex-start; gap: 25px; padding: 3px 0 0 26px; color: #b4b4b4; }
.tl-tools svg { width: 18px; height: 18px; }
.tl-tools .blue { color: #2b8ceb; }
.tl-left { border-right: 1px solid #2e2e2e; }
.heads { border-bottom: 1px solid #2e2e2e; }
.head { display: grid; grid-template-columns: 62px 18px 40px 35px 32px 35px 34px; align-items: stretch; justify-items: center; border-top: 1px solid #303030; background: #262626; font-size: 11px; color: #a0a0a0; }
.head > * { align-self: center; }
.head .lock { width: 10px; height: 13px; grid-column: 2; justify-self: start; margin-left: 1px; color: #b4b4b4; }
.head .track { align-self: stretch; width: 40px; display: flex; align-items: center; justify-content: center; }
.head .track.target { background: #0a5688; color: #8fb0c6; }
.head .sync { width: 16px; height: 12px; color: #b4b4b4; }
.head .eye { width: 16px; height: 12px; color: #b4b4b4; }
.head .mic { width: 12px; height: 17px; color: #b4b4b4; }
.head-master { grid-template-columns: 62px 18px 42px 1fr auto; font-size: 13px; color: #8d8d8d; padding: 0 9px 2px 0; justify-items: start; }
.head-master .level { color: #2b8ceb; padding-left: 58px; }
.head-master .keys { width: 15px; height: 12px; color: #b4b4b4; }
.h19 { height: 19px; }
.h20 { height: 20px; }
.h31 { height: 31px; }
.split { height: 4px; background: #1c1c1c; border-top: 1px solid #303030; }
.tl-body { position: relative; padding-top: 34px; background: linear-gradient(#232323 91px, #1b1b1b 91px); overflow: hidden; }
.ruler { position: relative; height: 54px; background: linear-gradient(90deg, #232323 3px, #434343 3px); border-left: 1px solid #2b8ceb; }
.origin { position: absolute; left: 18px; top: 2px; width: 1px; height: 48px; background: #828282; }
.labels { position: absolute; inset: 0; overflow: hidden; }
.labels span { position: absolute; top: 21px; transform: translateX(-50%); color: #a8a8a8; }
.render-bar { display: flex; gap: 18px; height: 19px; }
.done { height: 3px; background: #0be040; }
.done.first { flex: 215; }
.done.rest { flex: 620; }
.lanes { border-bottom: 1px solid #2e2e2e; }
.lane { position: relative; border-top: 1px solid #303030; }
.lane.grey { background: #424242; }
.clip { position: absolute; top: 0; bottom: 1px; overflow: hidden; display: flex; align-items: center; gap: 8px; color: #111; font: 11px/14px "Lato", sans-serif; white-space: nowrap; border-left: 1px solid rgba(255, 255, 255, .4); }
.a .clip { bottom: 0; border-left-color: #1b1b1b; }
.clip.film { background: #7199cc; align-items: flex-start; gap: 9px; padding-top: 2px; }
.clip.adj { background: #e283e2; }
.clip.black { background: #fcc4fa; }
.clip.vid { background: #a8e6ff; border-left-color: #333; }
.clip.aud { background: #53719b; color: #a8e6ff; }
.clip.aud::after { content: ""; position: absolute; left: 0; top: 0; border: 3px solid #d8d8d8; border-right-color: transparent; border-bottom-color: transparent; }
.clip.music { background: #1f9e70; color: #3fffe0; }
.clip.sfx { background: linear-gradient(#176e4f 7px, #2bdc9a 7px, #2bdc9a 8px, #176e4f 8px); border-bottom: 1px solid #2bdc9a; border-left: 2px solid #2bb98a; }
.clip.hole { background: #424242; }
.wave { position: absolute; inset: 0; width: 100%; height: 100%; }
.fx { position: relative; flex: none; width: 14px; height: 14px; border: 1px solid #a9a9a9; background: #707070; color: #111; text-align: center; font: italic bold 10px/11px "Liberation Sans", sans-serif; }
.fx.yellow { background: #f7c60c; }
.fx.violet { background: #a77cdc; border-color: #c3a0d8; }
.fx.green { background: #0f9a1c; border-color: #7cc68c; }
.cut { position: absolute; top: 4px; width: 6px; height: 11px; border: 1px solid #57506a; background: linear-gradient(120deg, #c9a95f 50%, #93783f 50%); }
.playhead { position: absolute; left: 14px; top: 85px; bottom: 0; width: 1px; background: #2b8ceb; }
.play-cap { position: absolute; left: 7px; top: 73px; width: 15px; height: 15px; }
.pointer { position: absolute; left: 15px; top: 190px; width: 12px; height: 19px; }
.tl-right { display: flex; flex-direction: column; gap: 8px; padding-top: 94px; }
.vbar { width: 13px; height: 136px; display: flex; flex-direction: column; justify-content: space-between; background: #2f2f2f; border-radius: 7px; }
.tl-scroll { height: 14px; margin: 3px 28px 0 16px; border: 1px solid #2e2e2e; border-radius: 7px; background: #1b1b1b; }
.tl-thumb { width: 34.7%; height: 12px; display: flex; justify-content: space-between; align-items: center; background: #303030; border-radius: 6px; }

/* Meters */
.meters { padding: 32px 0 16px 15px; }
.meter-main { flex: 1; display: flex; }
.meter-box { width: 46px; display: flex; gap: 2px; padding: 1px; background: #000; }
.channel { flex: 1; background: linear-gradient(#f54848 11px, #1d1d1d 11px, #1d1d1d calc(100% - 3px), #f2ea14 calc(100% - 3px), #f2ea14 calc(100% - 1px), #000 calc(100% - 1px)); }
.scale { position: relative; display: flex; flex-direction: column; justify-content: space-between; margin: 7px 0 -2px; padding-left: 9px; font-size: 11px; }
.scale-ticks { position: absolute; left: 0; top: 8px; width: 6px; height: calc(100% - 16px); overflow: visible; }
.scale-ticks line { stroke: #8d8d8d; }
.solo { display: flex; gap: 2px; padding: 4px 0 0 1px; }
.solo button { width: 21px; height: 21px; border: 1px solid #303030; border-radius: 3px; background: #1f1f1f; color: #a8a8a8; font-size: 11px; }

/* Status and taskbar */
.status { height: 25px; display: flex; align-items: center; background: #262626; padding-left: 3px; }
.status p { flex: 1; padding-left: 48px; margin-right: 31px; line-height: 25px; border-right: 1px solid #323232; }
.cc { width: 20px; height: 16px; }
.taskbar { height: 50px; display: flex; background: #1f2423; color: #fff; }
.taskbar button { display: flex; align-items: center; justify-content: center; }
.sys { display: flex; margin-right: 3px; }
.sys button { width: 60px; }
.s20 { width: 20px; height: 20px; }
.apps { display: flex; flex: 1; }
.apps button { width: 62px; }
.apps svg { width: 28px; height: 28px; }
.apps .open { background: linear-gradient(#b8aeae, #b8aeae) center bottom / 52px 3px no-repeat; }
.apps .current { background: linear-gradient(#b8aeae, #b8aeae) center bottom / 100% 3px no-repeat #3e3e3e; }
.adobe { font: bold 14px "Open Sans", sans-serif; }
.ps { fill: #0cb8ea; }
.pr { fill: #e273ff; }
.ae { fill: #cf96fd; }
.word { font: bold 11px "Open Sans", sans-serif; fill: #fff; }
.tray { display: flex; border-right: 1px solid #6f7271; margin-right: 4px; padding-right: 10px; }
.tray button { width: 30px; }
.tray svg { width: 22px; height: 18px; }
.tray .clock { width: 84px; flex-direction: column; font: 14px/22px "Open Sans", sans-serif; }
.tray .notify { width: 50px; }
.tray .notify svg { width: 22px; height: 22px; }
```
FILE: script.js
```js
const SVG = 'http://www.w3.org/2000/svg';
const SPAN = 853; // visible length of the sequence, in ruler units
const pct = v => (v / SPAN * 100).toFixed(3) + '%';
const icon = (id, cls) => `<svg class="${cls}"><use href="#${id}"/></svg>`;

// Effects tree
const tree = [
  ['3D Motion'], ['Dissolve'], ['Immersive Video'], ['Iris'], ['MA Film Roll'], ['MA Glitch', 'open'],
  ['Corruption', 'child'], ['Flicker', 'child', 1], ['Interference', 'child'], ['RGB', 'child', 1, 'selected'], ['Shaker', 'child', 1],
  ['MA Grunge'], ['MA Shifter']
];
document.getElementById('tree').innerHTML = tree.map(([name, kind, accel, sel]) => kind === 'child'
  ? `<li class="row child ${sel || ''}">${icon('i-trans', 'fx-icon')}<span class="name">${name}</span>${accel ? icon('i-accel', 'badge') : ''}</li>`
  : `<li class="row"><span class="slot">${kind ? icon('i-down', 'arrow open') : icon('i-right', 'arrow')}</span>${icon('i-folder', 'folder')}<span class="name">${name}</span></li>`
).join('');

// Tick marks; positions are percentages of the ruler's length
function ticks(id, start, step, count, tall, short, vertical) {
  const el = document.getElementById(id);
  for (let n = 0; n < count; n++) {
    const l = document.createElementNS(SVG, 'line');
    const major = n % (vertical ? 6 : 15) === 0;
    const at = (start + n * step) + '%';
    const len = major ? tall : short;
    const a = vertical ? { x1: 0, x2: len, y1: at, y2: at } : { x1: at, x2: at, y1: 14 - len, y2: 14 };
    for (const k in a) l.setAttribute(k, a[k]);
    el.appendChild(l);
  }
}
ticks('ruler-ticks', 0, 7.246 / SPAN * 100, 118, 14, 7);
ticks('scrub-ticks', 0.1, 0.6477, 154, 14, 6);
ticks('scale-ticks', 0, 100 / 60, 61, 5, 3, true);

document.getElementById('labels').innerHTML = [0, 8, 16, 24, 32, 40, 48, 56, 64].map((s, n) => {
  const t = s < 60 ? '00:00:' + String(s).padStart(2, '0') + ':00' : '00:01:04:00';
  return `<span style="left:${pct(n * 108.8)}">${t}</span>`;
}).join('');

// Clips: [start, end, kind, inset of the fx badge, badge colour, label]
const tracks = [
  { id: 'V6', h: 31, clips: [[233, 853, 'film', 10, 'yellow', 'Interval Timer 1 Minute.mp4']] },
  { id: 'V5', h: 19, clips: [[215, 853, 'adj', 12, 'violet', 'Adjustment Layer']] },
  { id: 'V4', h: 19, clips: [[0, 853, 'adj', 12, 'violet', 'Adjustment Layer']] },
  { id: 'V3', h: 19, clips: [[15, 60, 'adj', 16, 'violet']], cuts: [15, 55] },
  { id: 'V2', h: 19, clips: [[7, 60, 'adj', 17, 'violet'], [62, 83, 'adj'], [90, 117, 'adj'], [125, 168, 'adj'], [172, 214, 'adj']], cuts: [7, 59, 90, 112, 125, 162, 172, 208] },
  { id: 'V1', h: 19, target: 1, clips: [[0, 83, 'black', 12, '', 'Black Video'], [84, 117, 'vid'], [118, 168, 'vid', 19, 'green'], [169, 214, 'vid', 14, 'green'],
    [214, 233, 'hole'], [233, 324, 'vid', 18, '', 'MVI_0729'], [325, 340, 'vid'], [342, 469, 'vid', 11, '', 'MVI_0735.MP4 [V]'], [469, 523, 'vid', 16, ''], [524, 544, 'vid'],
    [545, 582, 'vid'], [583, 612, 'vid'], [613, 639, 'vid'], [640, 663, 'vid'], [663, 668, 'vid'], [668, 673, 'vid'], [674, 678, 'vid'], [679, 692, 'vid'], [692, 723, 'vid'],
    [724, 782, 'vid', 19, ''], [783, 840, 'vid', 17, ''], [841, 853, 'vid']],
    cuts: [84, 118, 166, 208, 233, 326, 470, 524, 545, 579, 613, 641, 693, 724, 783, 839, 848] },
  { split: 1 },
  { id: 'A1', h: 20, target: 1, grey: 1, clips: [[233, 324, 'aud', 10, ''], [325, 340, 'aud'], [342, 469, 'aud', 11, ''], [469, 523, 'aud', 13, ''], [524, 534, 'aud'], [537, 544, 'aud'],
    [545, 582, 'aud', 12, ''], [583, 612, 'aud'], [613, 639, 'aud'], [640, 663, 'aud'], [668, 670, 'music'], [679, 681, 'music'], [693, 723, 'aud'], [724, 782, 'aud', 11, ''], [783, 840, 'aud', 11, ''], [841, 853, 'aud']] },
  { id: 'A2', h: 20, target: 1, clips: [[0, 788, 'music', 12, 'yellow'], [788, 853, 'music', 11, 'yellow']] },
  { id: 'A3', h: 20, target: 1, grey: 1, clips: [] },
  { id: 'A4', h: 19, clips: [[325, 469, 'sfx', 10, ''], [524, 549, 'sfx'], [585, 614, 'sfx'], [645, 695, 'sfx', 10, ''], [729, 785, 'sfx', 10, '']] },
  { id: 'A5', h: 19, clips: [] },
  { id: 'A6', h: 19, clips: [] },
  { id: 'Master', h: 19, clips: [] }
];

let seed = 7;
const rnd = () => (seed = (seed * 16807) % 2147483647) / 2147483647;

// Rectified two-channel waveform, each channel standing on its own baseline
function wave(start, end, music) {
  const w = end - start;
  let d = '';
  for (const base of [10, 19]) {
    for (let x = 0; x < w; x += 2) {
      const at = start + x;
      const quiet = music && (at < 140 ? 2 : at > 655 && at < 708 ? 1 : 0);
      const amp = music ? (quiet === 2 ? 2 + rnd() * 2 : quiet === 1 ? (base === 10 ? 4 : 1) : 3 + rnd() * 3.5) : 2 + rnd() * rnd() * 6;
      d += `M${x} ${base}v-${amp.toFixed(1)}h2v${amp.toFixed(1)}z`;
    }
  }
  return `<svg class="wave" viewBox="0 0 ${w} 19" preserveAspectRatio="none"><path d="${d}" fill="currentColor"/></svg>`;
}

const heads = [], lanes = [];
for (const t of tracks) {
  if (t.split) { heads.push('<div class="split"></div>'); lanes.push('<div class="split"></div>'); continue; }
  const lock = icon('i-lock', 'lock');
  if (t.id === 'Master') {
    heads.push(`<div class="head head-master h19">${lock}<span>Master</span><span class="level">0.0</span><svg class="keys" viewBox="0 0 15 12"><path d="M0 0l6 4h3l6-4v12L9 8H6l-6 4z" fill="currentColor"/></svg></div>`);
  } else {
    const rest = t.id[0] === 'V' ? icon('i-eye', 'eye') : `<button>M</button><button>S</button>${icon('i-mic', 'mic')}`;
    heads.push(`<div class="head h${t.h}">${lock}<span class="track ${t.target ? 'target' : ''}">${t.id}</span>${icon('i-sync', 'sync')}${rest}</div>`);
  }
  const clips = t.clips.map(([a, b, kind, inset, tint, label]) => {
    const w = kind === 'aud' || (kind === 'music' && b - a > 2) ? wave(a, b, kind === 'music') : '';
    const fx = inset === undefined ? '' : `<span class="fx ${tint}">fx</span>`;
    return `<div class="clip ${kind}" style="left:${pct(a)};width:${pct(b - a)};padding-left:${inset || 0}px">${w}${fx}${label ? `<span>${label}</span>` : ''}</div>`;
  }).join('');
  const cuts = (t.cuts || []).map(c => `<i class="cut" style="left:${pct(c)}"></i>`).join('');
  lanes.push(`<div class="lane h${t.h} ${t.id[0] === 'A' ? 'a' : 'v'} ${t.grey ? 'grey' : ''}">${clips}${cuts}</div>`);
}
document.getElementById('heads').innerHTML = heads.join('');
document.getElementById('lanes').innerHTML = lanes.join('');
```
